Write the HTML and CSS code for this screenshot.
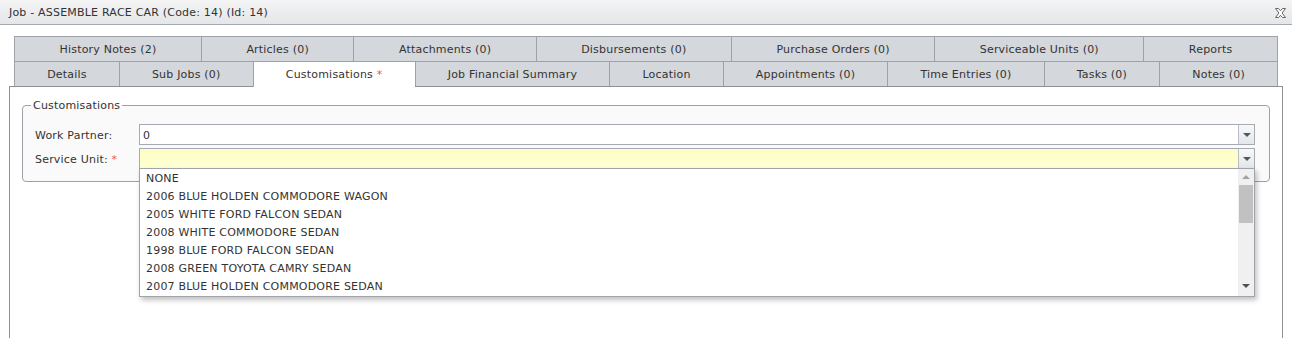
FILE: index.html
```html
<!DOCTYPE html>
<html lang="en">

<head>
    <meta charset="UTF-8">
    <meta name="viewport" content="width=device-width, initial-scale=1.0">
    <title>Job - ASSEMBLE RACE CAR</title>
    <link rel="stylesheet" href="styles.css">
</head>

<body>
    <div class="window">
        <div class="titlebar">
            <span class="title">Job - ASSEMBLE RACE CAR (Code: 14) (Id: 14)</span>
            <span class="close">
                <svg width="13" height="10" viewBox="0 0 13 10">
                    <path d="M1.5 0.5h3l2 2.2 2-2.2h3l-3.4 4.5 3.4 4.5h-3l-2-2.2-2 2.2h-3l3.4-4.5z" fill="#fff" stroke="#666" stroke-width="1"/>
                </svg>
            </span>
        </div>

        <div class="content">
            <div class="tabs">
                <div class="tabrow">
                    <div class="tab">History Notes (2)</div>
                    <div class="tab">Articles (0)</div>
                    <div class="tab">Attachments (0)</div>
                    <div class="tab">Disbursements (0)</div>
                    <div class="tab">Purchase Orders (0)</div>
                    <div class="tab">Serviceable Units (0)</div>
                    <div class="tab">Reports</div>
                </div>
                <div class="tabrow">
                    <div class="tab">Details</div>
                    <div class="tab">Sub Jobs (0)</div>
                    <div class="tab active">Customisations <span class="req">*</span></div>
                    <div class="tab">Job Financial Summary</div>
                    <div class="tab">Location</div>
                    <div class="tab">Appointments (0)</div>
                    <div class="tab">Time Entries (0)</div>
                    <div class="tab">Tasks (0)</div>
                    <div class="tab">Notes (0)</div>
                </div>
            </div>

            <div class="panel">
                <fieldset class="group">
                    <legend>Customisations</legend>
                    <div class="field">
                        <label>Work Partner:</label>
                        <div class="combo">
                            <div class="combo-text">0</div>
                            <div class="combo-btn"><span class="arrow"></span></div>
                        </div>
                    </div>
                    <div class="field">
                        <label>Service Unit: <span class="req">*</span></label>
                        <div class="combo required">
                            <div class="combo-text"></div>
                            <div class="combo-btn"><span class="arrow"></span></div>
                            <div class="dropdown">
                                <ul class="items">
                                    <li>NONE</li>
                                    <li>2006 BLUE HOLDEN COMMODORE WAGON</li>
                                    <li>2005 WHITE FORD FALCON SEDAN</li>
                                    <li>2008 WHITE COMMODORE SEDAN</li>
                                    <li>1998 BLUE FORD FALCON SEDAN</li>
                                    <li>2008 GREEN TOYOTA CAMRY SEDAN</li>
                                    <li>2007 BLUE HOLDEN COMMODORE SEDAN</li>
                                </ul>
                                <div class="scrollbar">
                                    <span class="up"></span>
                                    <span class="thumb"></span>
                                    <span class="down"></span>
                                </div>
                            </div>
                        </div>
                    </div>
                </fieldset>
            </div>
        </div>
    </div>
</body>

</html>
```

FILE: styles.css
```css
* {
    box-sizing: border-box;
}

body {
    margin: 0;
    font-family: 'DejaVu Sans', Verdana, sans-serif;
    font-size: 11px;
    letter-spacing: 0.2px;
    color: #333;
    background: #fff;
}

.window {
    height: 338px;
    overflow: hidden;
}

.titlebar {
    display: flex;
    align-items: center;
    justify-content: space-between;
    height: 25px;
    padding: 0 5px 0 9px;
    background: linear-gradient(#f4f4f5, #e4e6e9);
    border-bottom: 1px solid #a4a9b0;
}

.close {
    display: flex;
    padding-top: 2px;
}

.content {
    padding: 11px 9px 0 9px;
}

.tabs {
    margin: 0 5px;
}

.tabrow {
    display: flex;
}

.tab {
    flex: 1 1 auto;
    height: 25px;
    padding-top: 1px;
    line-height: 24px;
    text-align: center;
    white-space: nowrap;
    background: #d4d7db;
    border-top: 1px solid #9da2a8;
    border-left: 1px solid #9da2a8;
}

.tab:last-child {
    border-right: 1px solid #9da2a8;
}

.tab.active {
    background: #fff;
    position: relative;
    height: 26px;
    margin-bottom: -1px;
}

.req {
    color: #f25a2a;
}

.panel {
    height: 260px;
    background: #fff;
    border: 1px solid #8d9196;
    border-bottom: none;
    padding: 12px 12px 0 12px;
}

.group {
    margin: 0;
    padding: 12px 14px 12px 12px;
    background: #fafafa;
    border: 1px solid #9da2a8;
    border-radius: 4px;
}

.group legend {
    padding: 0 2px;
    margin-left: -4px;
}

.field {
    display: flex;
    align-items: center;
    margin-bottom: 3px;
}

.field:last-child {
    margin-bottom: 0;
}

.field label {
    width: 104px;
    flex: none;
    padding-top: 1px;
}

.combo {
    position: relative;
    flex: 1;
    display: flex;
    height: 21px;
    background: #fff;
    border: 1px solid #a6abb2;
}

.combo.required {
    background: linear-gradient(#fdfdc6, #ffffd2);
}

.combo-text {
    flex: 1;
    padding: 1px 0 0 3px;
    line-height: 19px;
}

.combo-btn {
    width: 16px;
    display: flex;
    align-items: center;
    justify-content: center;
    border-left: 1px solid #b9bec4;
    background: linear-gradient(#f7f8fa, #e3e6ea);
}

.arrow {
    width: 0;
    height: 0;
    border-left: 4px solid transparent;
    border-right: 4px solid transparent;
    border-top: 4px solid #555;
}

.dropdown {
    position: absolute;
    top: 19px;
    left: -1px;
    right: -1px;
    height: 129px;
    display: flex;
    background: #fff;
    border: 1px solid #a0a4aa;
    box-shadow: 2px 3px 5px rgba(0, 0, 0, 0.25);
    z-index: 2;
}

.items {
    flex: 1;
    list-style: none;
    margin: 0;
    padding: 1px 0 0 0;
}

.items li {
    height: 18px;
    line-height: 18px;
    padding-left: 6px;
}

.scrollbar {
    width: 16px;
    display: flex;
    flex-direction: column;
    align-items: center;
    background: #f0f0f0;
}

.scrollbar .up,
.scrollbar .down {
    width: 0;
    height: 0;
    border-left: 4px solid transparent;
    border-right: 4px solid transparent;
}

.scrollbar .up {
    margin-top: 6px;
    border-bottom: 4px solid #a3a3a3;
}

.scrollbar .thumb {
    width: 14px;
    height: 38px;
    margin-top: 6px;
    background: #c1c1c1;
}

.scrollbar .down {
    margin-top: auto;
    margin-bottom: 8px;
    border-top: 4px solid #505050;
}
```
